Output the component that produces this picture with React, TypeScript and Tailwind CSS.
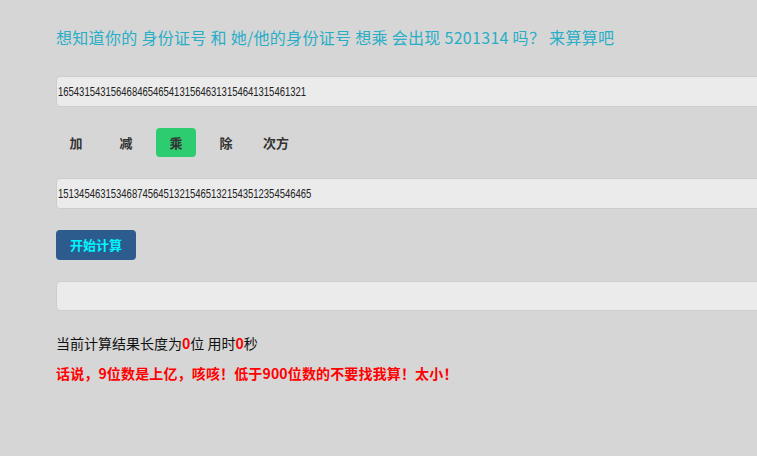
import React from "react";

const cjk = '"Noto Sans CJK SC", "Liberation Sans", sans-serif';
const sans = '"Liberation Sans", Arial, sans-serif';

function Digits({ children }: { children: string }) {
  return (
    <span
      className="inline-block origin-left scale-x-[0.73] text-[13px] text-[#222] whitespace-nowrap"
      style={{ fontFamily: sans }}
    >
      {children}
    </span>
  );
}

export default function App() {
  const ops = ["加", "减", "乘", "除", "次方"];
  return (
    <div
      className="w-[757px] h-[456px] overflow-hidden bg-[#d6d6d6] pl-[56px] pt-[25px]"
      style={{ fontFamily: cjk }}
    >
      <div className="w-[760px]">
        <h1 className="text-[16px] leading-[24px] tracking-[0.3px] text-[#2aaec6] font-normal mb-[27px]">
          想知道你的 身份证号 和 她/他的身份证号 想乘 会出现 5201314 吗？ 来算算吧
        </h1>
        <div className="h-[31px] bg-[#ebebeb] border border-[#cdcdcd] rounded-[4px] flex items-center pl-[1px] overflow-hidden">
          <Digits>16543154315646846546541315646313154641315461321</Digits>
        </div>
        <div className="flex gap-[10px] mt-[21px]">
          {ops.map((o) => (
            <div
              key={o}
              className={`w-[40px] h-[29px] rounded-[4px] flex items-center justify-center text-[13px] font-bold text-[#333] ${
                o === "乘" ? "bg-[#2ecc71]" : ""
              }`}
            >
              {o}
            </div>
          ))}
        </div>
        <div className="mt-[21px] h-[31px] bg-[#ebebeb] border border-[#cdcdcd] rounded-[4px] flex items-center pl-[1px] overflow-hidden">
          <Digits>151345463153468745645132154651321543512354546465</Digits>
        </div>
        <div className="mt-[21px] w-[80px] h-[30px] rounded-[4px] bg-[#2c5b8e] flex items-center justify-center text-[13px] font-bold text-[#00f6ff]">
          开始计算
        </div>
        <div className="mt-[21px] h-[30px] bg-[#ebebeb] border border-[#cdcdcd] rounded-[4px]" />
        <div className="mt-[22px] text-[14px] leading-[20px] text-[#111]">
          当前计算结果长度为<span className="text-[#ff0000] font-bold">0</span>位 用时
          <span className="text-[#ff0000] font-bold">0</span>秒
        </div>
        <div className="mt-[10px] text-[14px] leading-[20px] tracking-[0.15px] text-[#ff0000] font-bold">
          话说，9位数是上亿，咳咳！低于900位数的不要找我算！太小！
        </div>
      </div>
    </div>
  );
}
